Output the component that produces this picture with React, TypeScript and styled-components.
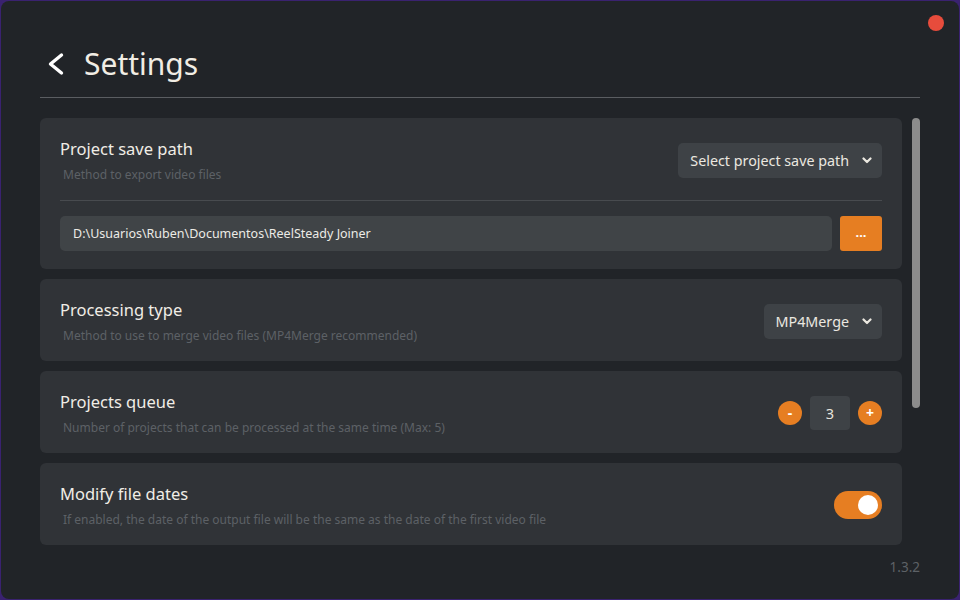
import { useState } from "react";
import styled, { createGlobalStyle } from "styled-components";

const GlobalStyle = createGlobalStyle`
  html, body {
    margin: 0;
    padding: 0;
    background: #2c1a52;
  }
  body {
    font-family: "Noto Sans", "Open Sans", sans-serif;
  }
  * {
    box-sizing: border-box;
  }
`;

const Frame = styled.div`
  width: 960px;
  height: 600px;
  padding: 1px;
  background: #3a2270;
`;

const Window = styled.div`
  position: relative;
  height: 598px;
  border-radius: 8px;
  background: #212428;
  padding: 0 39px;
  display: flex;
  flex-direction: column;
`;

const CloseDot = styled.span`
  position: absolute;
  top: 14px;
  right: 15px;
  width: 16px;
  height: 16px;
  border-radius: 50%;
  background: #e74c3c;
`;

const Header = styled.header`
  display: flex;
  align-items: center;
  gap: 20px;
  padding: 42px 0 12px 8px;
  border-bottom: 1px solid #5a5d61;
`;

const BackButton = styled.button`
  display: flex;
  align-items: center;
  padding: 0;
  border: none;
  background: none;
  cursor: pointer;
`;

const Title = styled.h1`
  margin: 0;
  font-size: 30px;
  line-height: 42px;
  font-weight: 400;
  color: #f1ede4;
`;

const ScrollArea = styled.div`
  margin-top: 20px;
  height: 432px;
  display: flex;
  gap: 10px;
`;

const CardList = styled.div`
  flex: 1;
  overflow: hidden;
  display: flex;
  flex-direction: column;
  gap: 10px;
`;

const ScrollTrack = styled.div`
  width: 8px;
  flex-shrink: 0;
`;

const Thumb = styled.div<{ $size: number }>`
  height: ${(p) => p.$size}px;
  border-radius: 4px;
  background: #8c8c8c;
`;

const Card = styled.section`
  flex-shrink: 0;
  background: #303337;
  border-radius: 6px;
  padding: 19px 20px 17px;
`;

const Row = styled.div`
  display: flex;
  align-items: center;
  justify-content: space-between;
`;

const Info = styled.div`
  display: flex;
  flex-direction: column;
`;

const CardTitle = styled.h2`
  margin: 0;
  font-size: 16.5px;
  line-height: 24px;
  font-weight: 400;
  color: #f0ede6;
`;

const CardDesc = styled.p`
  margin: 5px 0 0 3px;
  font-size: 12px;
  line-height: 17px;
  color: #5d6166;
`;

const Select = styled.button`
  display: flex;
  align-items: center;
  gap: 13px;
  height: 35px;
  padding: 0 10px 0 12px;
  border: none;
  border-radius: 5px;
  background: #3e4246;
  color: #ebe8e0;
  font-family: inherit;
  font-size: 14.3px;
  cursor: pointer;
`;

const Divider = styled.hr`
  margin: 17px 0 15px;
  border: none;
  border-top: 1px solid #484b4f;
`;

const PathRow = styled.div`
  display: flex;
  gap: 8px;
  margin-bottom: 1px;
`;

const PathInput = styled.div`
  flex: 1;
  height: 35px;
  display: flex;
  align-items: center;
  padding-left: 13px;
  border-radius: 5px;
  background: #404447;
  color: #ecebe6;
  font-size: 12.5px;
`;

const BrowseButton = styled.button`
  width: 42px;
  height: 35px;
  border: none;
  border-radius: 3px;
  background: #e67e22;
  color: #fff;
  font-family: inherit;
  font-size: 13px;
  font-weight: 700;
  line-height: 1;
  padding-bottom: 4px;
  cursor: pointer;
`;

const Counter = styled.div`
  display: flex;
  align-items: center;
  gap: 8px;
`;

const RoundButton = styled.button`
  width: 24px;
  height: 24px;
  border: none;
  border-radius: 50%;
  background: #e67e22;
  color: #fff;
  font-family: inherit;
  font-size: 14px;
  font-weight: 700;
  line-height: 24px;
  padding: 0;
  cursor: pointer;
`;

const ValueBox = styled.div`
  width: 40px;
  height: 34px;
  display: flex;
  align-items: center;
  justify-content: center;
  border-radius: 4px;
  background: #3e4246;
  color: #e6e4de;
  font-size: 14.5px;
`;

const Toggle = styled.button<{ $on: boolean }>`
  width: 48px;
  height: 28px;
  padding: 0 4px;
  border: none;
  border-radius: 14px;
  background: ${(p) => (p.$on ? "#e67e22" : "#55595e")};
  display: flex;
  align-items: center;
  justify-content: ${(p) => (p.$on ? "flex-end" : "flex-start")};
  cursor: pointer;
`;

const Knob = styled.span`
  width: 20px;
  height: 20px;
  border-radius: 50%;
  background: #fff;
`;

const Version = styled.div`
  margin-top: 7px;
  text-align: right;
  font-size: 13.5px;
  line-height: 20px;
  color: #5d6166;
`;

function Chevron() {
  return (
    <svg width="10" height="7" viewBox="0 0 10 7">
      <polyline
        points="1.5,1.5 5,5 8.5,1.5"
        fill="none"
        stroke="#ebe8e0"
        strokeWidth="2.2"
        strokeLinecap="round"
        strokeLinejoin="round"
      />
    </svg>
  );
}

export default function App() {
  const [queue, setQueue] = useState(3);
  const [modifyDates, setModifyDates] = useState(true);

  return (
    <>
      <GlobalStyle />
      <Frame>
        <Window>
          <CloseDot />
          <Header>
            <BackButton aria-label="Back">
              <svg width="16" height="24" viewBox="0 0 16 24">
                <polyline
                  points="13.5,3 2.5,12 13.5,21"
                  fill="none"
                  stroke="#ffffff"
                  strokeWidth="3.4"
                  strokeLinecap="round"
                  strokeLinejoin="round"
                />
              </svg>
            </BackButton>
            <Title>Settings</Title>
          </Header>

          <ScrollArea>
            <CardList>
              <Card>
                <Row>
                  <Info>
                    <CardTitle>Project save path</CardTitle>
                    <CardDesc>Method to export video files</CardDesc>
                  </Info>
                  <Select>
                    Select project save path
                    <Chevron />
                  </Select>
                </Row>
                <Divider />
                <PathRow>
                  <PathInput>D:\Usuarios\Ruben\Documentos\ReelSteady Joiner</PathInput>
                  <BrowseButton>...</BrowseButton>
                </PathRow>
              </Card>

              <Card>
                <Row>
                  <Info>
                    <CardTitle>Processing type</CardTitle>
                    <CardDesc>Method to use to merge video files (MP4Merge recommended)</CardDesc>
                  </Info>
                  <Select>
                    MP4Merge
                    <Chevron />
                  </Select>
                </Row>
              </Card>

              <Card>
                <Row>
                  <Info>
                    <CardTitle>Projects queue</CardTitle>
                    <CardDesc>Number of projects that can be processed at the same time (Max: 5)</CardDesc>
                  </Info>
                  <Counter>
                    <RoundButton onClick={() => setQueue((q) => Math.max(1, q - 1))}>-</RoundButton>
                    <ValueBox>{queue}</ValueBox>
                    <RoundButton onClick={() => setQueue((q) => Math.min(5, q + 1))}>+</RoundButton>
                  </Counter>
                </Row>
              </Card>

              <Card>
                <Row>
                  <Info>
                    <CardTitle>Modify file dates</CardTitle>
                    <CardDesc>
                      If enabled, the date of the output file will be the same as the date of the first video file
                    </CardDesc>
                  </Info>
                  <Toggle $on={modifyDates} onClick={() => setModifyDates((v) => !v)}>
                    <Knob />
                  </Toggle>
                </Row>
              </Card>
            </CardList>
            <ScrollTrack>
              <Thumb $size={290} />
            </ScrollTrack>
          </ScrollArea>

          <Version>1.3.2</Version>
        </Window>
      </Frame>
    </>
  );
}
